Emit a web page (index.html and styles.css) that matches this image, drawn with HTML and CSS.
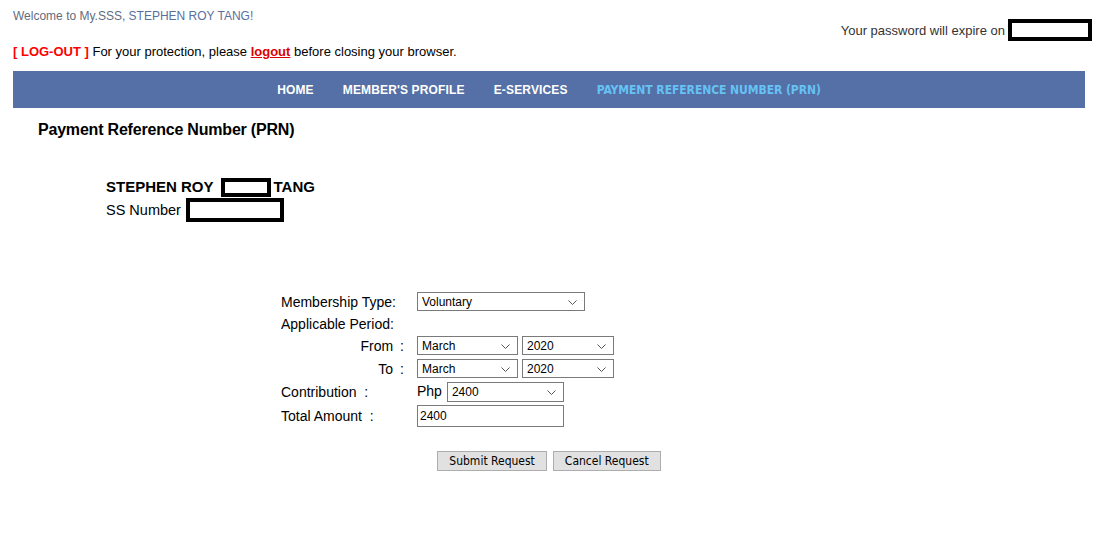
FILE: index.html
```html
<!DOCTYPE html>
<html>
<head>
<meta charset="utf-8">
<link rel="stylesheet" href="styles.css">
</head>
<body>
<div class="top">
  <div class="top-left">
    <div class="welcome">Welcome to My.SSS, <span class="wname">STEPHEN ROY TANG!</span></div>
    <div class="logout-line"><span class="lo">[ LOG-OUT ]</span> For your protection, please <a href="#" class="lo-link">logout</a> before closing your browser.</div>
  </div>
  <div class="expire">Your password will expire on <span class="redact r-date"></span></div>
</div>
<nav class="nav">
  <a href="#" class="nav-item">HOME</a>
  <a href="#" class="nav-item">MEMBER'S PROFILE</a>
  <a href="#" class="nav-item">E-SERVICES</a>
  <a href="#" class="nav-item active">PAYMENT REFERENCE NUMBER (PRN)</a>
</nav>
<h1 class="title">Payment Reference Number (PRN)</h1>
<div class="member">
  <div class="mname">STEPHEN ROY <span class="redact r-mid"></span> TANG</div>
  <div class="ssnum">SS Number <span class="redact r-ss"></span></div>
</div>
<form class="form">
  <div class="lbl">Membership Type:</div>
  <div class="ctl"><span class="selwrap"><select class="sel sel-type"><option>Voluntary</option></select><svg class="chev" viewBox="0 0 9 5" width="9" height="5"><path d="M0.5 0.5 L4.5 4.5 L8.5 0.5" fill="none" stroke="#555" stroke-width="1"/></svg></span></div>
  <div class="lbl span2 short">Applicable Period:</div>
  <div class="lbl right">From<span class="colon">:</span></div>
  <div class="ctl"><span class="selwrap"><select class="sel sel-month"><option>March</option></select><svg class="chev" viewBox="0 0 9 5" width="9" height="5"><path d="M0.5 0.5 L4.5 4.5 L8.5 0.5" fill="none" stroke="#555" stroke-width="1"/></svg></span><span class="selwrap"><select class="sel sel-year"><option>2020</option></select><svg class="chev" viewBox="0 0 9 5" width="9" height="5"><path d="M0.5 0.5 L4.5 4.5 L8.5 0.5" fill="none" stroke="#555" stroke-width="1"/></svg></span></div>
  <div class="lbl right">To<span class="colon">:</span></div>
  <div class="ctl"><span class="selwrap"><select class="sel sel-month"><option>March</option></select><svg class="chev" viewBox="0 0 9 5" width="9" height="5"><path d="M0.5 0.5 L4.5 4.5 L8.5 0.5" fill="none" stroke="#555" stroke-width="1"/></svg></span><span class="selwrap"><select class="sel sel-year"><option>2020</option></select><svg class="chev" viewBox="0 0 9 5" width="9" height="5"><path d="M0.5 0.5 L4.5 4.5 L8.5 0.5" fill="none" stroke="#555" stroke-width="1"/></svg></span></div>
  <div class="lbl">Contribution&nbsp; :</div>
  <div class="ctl"><span class="php">Php</span><span class="selwrap"><select class="sel sel-amt"><option>2400</option></select><svg class="chev" viewBox="0 0 9 5" width="9" height="5"><path d="M0.5 0.5 L4.5 4.5 L8.5 0.5" fill="none" stroke="#555" stroke-width="1"/></svg></span></div>
  <div class="lbl">Total Amount&nbsp; :</div>
  <div class="ctl"><input class="inp" type="text" value="2400"></div>
</form>
<div class="buttons">
  <button class="btn" type="button">Submit Request</button>
  <button class="btn" type="button">Cancel Request</button>
</div>
</body>
</html>
```

FILE: styles.css
```css
body {
  margin: 0;
  font-family: "Liberation Sans", Arial, sans-serif;
  color: #000;
  background: #fff;
}
.top {
  display: flex;
  align-items: flex-start;
  justify-content: space-between;
  width: 1079px;
  padding: 9px 0 0 13px;
}
.welcome {
  font-size: 12px;
  line-height: 15px;
  color: #636c80;
}
.wname { color: #5a6f9e; }
.logout-line {
  margin-top: 20px;
  font-size: 13px;
  line-height: 16px;
}
.lo { color: #f00; font-weight: bold; }
.lo-link { color: #d00; font-weight: bold; text-decoration: underline; }
.expire {
  font-size: 13px;
  color: #333;
  display: flex;
  align-items: center;
  gap: 3px;
  margin-top: 10px;
}
.redact {
  display: inline-block;
  box-sizing: border-box;
  border: 4px solid #000;
  background: #fff;
  vertical-align: middle;
}
.r-date { width: 84px; height: 22px; }
.nav {
  margin: 11px 0 0 13px;
  width: 1072px;
  height: 37px;
  background: #5570a6;
  display: flex;
  align-items: center;
  justify-content: center;
  gap: 29px;
}
.nav-item {
  color: #fff;
  text-decoration: none;
  font-weight: bold;
  font-size: 12px;
  letter-spacing: 0.15px;
}
.nav-item.active {
  color: #66c2f4;
  font-family: "DejaVu Sans Condensed", "DejaVu Sans", sans-serif;
  font-size: 12px;
  letter-spacing: -0.05px;
}
.title {
  margin: 12px 0 0 38px;
  font-size: 16px;
  line-height: 19px;
  font-weight: bold;
  letter-spacing: -0.2px;
}
.member {
  margin: 38px 0 0 106px;
  font-size: 14.5px;
}
.mname {
  font-weight: bold;
  font-size: 15px;
  line-height: 20px;
  display: flex;
  align-items: center;
  gap: 3px;
}
.r-mid { width: 50px; height: 19px; margin-left: 4px; }
.ssnum {
  display: flex;
  align-items: center;
  gap: 5px;
  margin-top: 1px;
}
.r-ss { width: 98px; height: 24px; }
.form {
  margin: 70px 0 0 281px;
  display: grid;
  grid-template-columns: 136px auto;
  row-gap: 3px;
  font-size: 14px;
  align-items: center;
}
.lbl { line-height: 19px; }
.lbl.short { line-height: 18px; }
.span2 { grid-column: 1 / span 2; }
.right { text-align: right; padding-right: 13px; }
.colon { margin-left: 7px; }
.ctl { display: flex; align-items: flex-start; gap: 4px; min-height: 20px; }
.selwrap {
  position: relative;
  display: inline-block;
  line-height: 0;
}
.chev {
  position: absolute;
  right: 8px;
  top: 50%;
  margin-top: -2px;
  pointer-events: none;
}
.sel {
  -webkit-appearance: none;
  appearance: none;
  font-family: "Liberation Sans", Arial, sans-serif;
  font-size: 12px;
  color: #000;
  height: 19px;
  line-height: 17px;
  border: 1px solid #7a7a7a;
  border-radius: 0;
  background: #fff;
  padding: 1px 0 0 4px;
  margin: 0;
  box-sizing: border-box;
}
.sel-type { width: 168px; }
.sel-month { width: 101px; }
.sel-year { width: 92px; }
.sel-amt { width: 117px; height: 20px; }
.php { font-size: 14px; line-height: 18px; margin-right: 1px; }
.inp {
  font-family: "Liberation Sans", Arial, sans-serif;
  font-size: 12px;
  width: 147px;
  height: 22px;
  border: 1px solid #7a7a7a;
  padding: 0 2px;
  margin: 0;
  box-sizing: border-box;
}
.buttons {
  margin: 24px 0 0 0;
  width: 1098px;
  display: flex;
  justify-content: center;
  gap: 6px;
}
.btn {
  font-family: "DejaVu Sans Condensed", "Liberation Sans", sans-serif;
  font-size: 12px;
  height: 20px;
  padding: 0 11px;
  background: #e1e1e1;
  border: 1px solid #adadad;
  border-radius: 0;
  color: #000;
}
```
